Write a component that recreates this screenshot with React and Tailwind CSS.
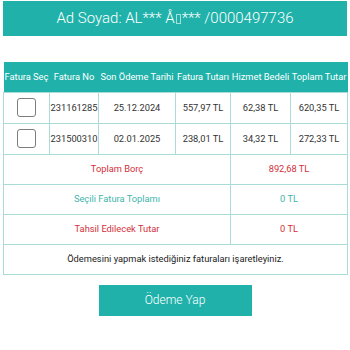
import React from "react";

const rows = [
  { no: "231161285", date: "25.12.2024", tutar: "557,97 TL", hizmet: "62,38 TL", toplam: "620,35 TL" },
  { no: "231500310", date: "02.01.2025", tutar: "238,01 TL", hizmet: "34,32 TL", toplam: "272,33 TL" },
];

const cell = "border border-[#a9dcd6] text-center";

export default function App() {
  return (
    <div className="w-[350px] h-[350px] bg-white pt-px px-[3px] font-['Roboto',sans-serif]">
      <div className="h-[35px] bg-[#20b2aa] flex items-center justify-center text-white text-[15px] font-light">
        Ad Soyad: AL*** Å
        <span className="inline-block w-[5px] h-[10px] border border-white/60 mx-px" />
        *** /0000497736
      </div>

      <table className="mt-[26px] w-[344px] border-collapse table-fixed text-[9.3px] text-[#333]">
        <colgroup>
          <col className="w-[46px]" />
          <col className="w-[49px]" />
          <col className="w-[77px]" />
          <col className="w-[55px]" />
          <col className="w-[60px]" />
          <col className="w-[57px]" />
        </colgroup>
        <thead>
          <tr className="h-[30px] bg-[#20b2aa] text-white">
            <th className="font-normal whitespace-nowrap">Fatura Seç</th>
            <th className="font-normal whitespace-nowrap">Fatura No</th>
            <th className="font-normal whitespace-nowrap">Son Ödeme Tarihi</th>
            <th className="font-normal whitespace-nowrap">Fatura Tutarı</th>
            <th className="font-normal whitespace-nowrap">Hizmet Bedeli</th>
            <th className="font-normal whitespace-nowrap">Toplam Tutar</th>
          </tr>
        </thead>
        <tbody>
          {rows.map((r) => (
            <tr key={r.no} className="h-[31px]">
              <td className={cell}>
                <div className="mx-auto w-[19px] h-[19px] rounded-[3px] border-[1.5px] border-[#7d7d7d]" />
              </td>
              <td className={cell}>{r.no}</td>
              <td className={cell}>{r.date}</td>
              <td className={cell}>{r.tutar}</td>
              <td className={cell}>{r.hizmet}</td>
              <td className={cell}>{r.toplam}</td>
            </tr>
          ))}
          <tr className="h-[30px]">
            <td colSpan={4} className={`${cell} text-[#d2303c]`}>Toplam Borç</td>
            <td colSpan={2} className={`${cell} text-[#d2303c]`}>892,68 TL</td>
          </tr>
          <tr className="h-[30px]">
            <td colSpan={4} className={`${cell} text-[#3fb5ab]`}>Seçili Fatura Toplamı</td>
            <td colSpan={2} className={`${cell} text-[#3fb5ab]`}>0 TL</td>
          </tr>
          <tr className="h-[30px]">
            <td colSpan={4} className={`${cell} text-[#d2303c]`}>Tahsil Edilecek Tutar</td>
            <td colSpan={2} className={`${cell} text-[#d2303c]`}>0 TL</td>
          </tr>
          <tr className="h-[30px]">
            <td colSpan={6} className={`${cell} text-[#222]`}>
              Ödemesini yapmak istediğiniz faturaları işaretleyiniz.
            </td>
          </tr>
        </tbody>
      </table>

      <div className="flex justify-center mt-[10px]">
        <button className="w-[153px] h-[31px] bg-[#20b2aa] text-white text-[12px] font-light">Ödeme Yap</button>
      </div>
    </div>
  );
}
